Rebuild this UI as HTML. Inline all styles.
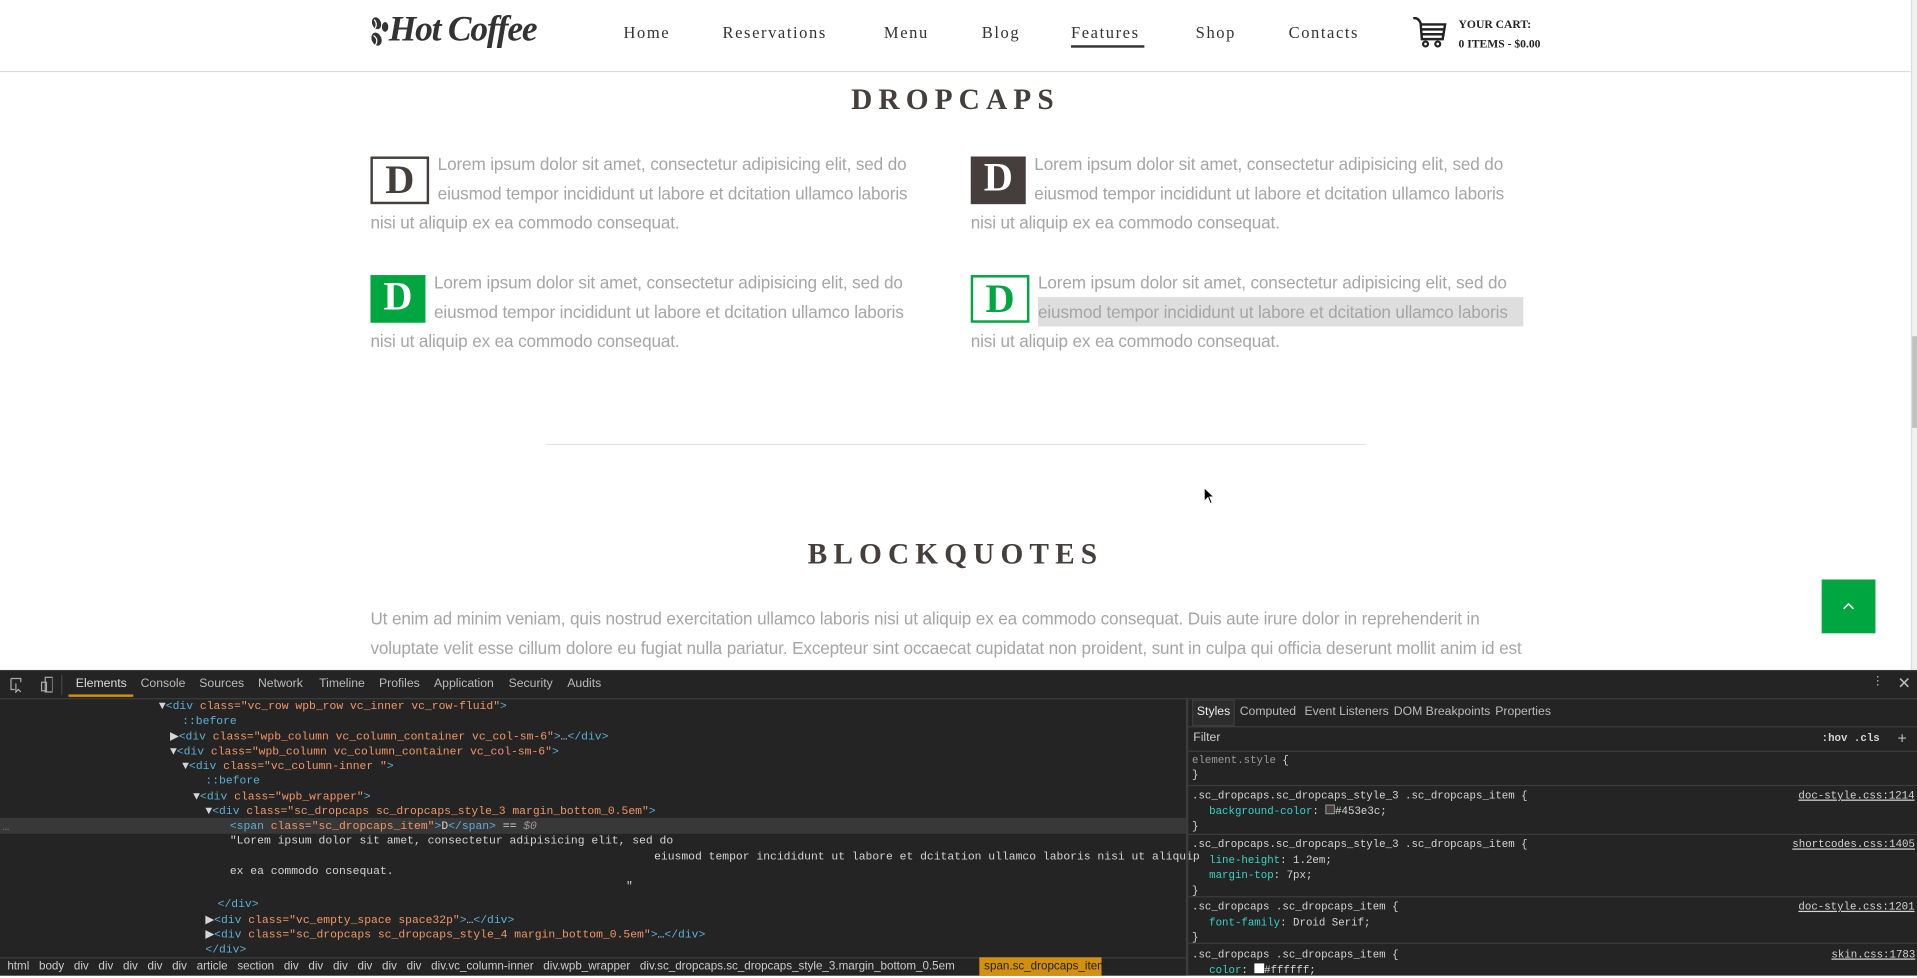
<!DOCTYPE html>
<html><head><meta charset="utf-8"><style>
*{margin:0;padding:0;box-sizing:border-box}
html,body{width:1917px;height:976px;overflow:hidden;background:#fff}
#w{position:absolute;left:0;top:0;width:1568px;height:798px;transform:scale(1.22258);transform-origin:0 0;font-family:"Liberation Sans",sans-serif}
.a{position:absolute;white-space:nowrap}
.nav{font-family:"Liberation Serif",serif;font-size:13.5px;letter-spacing:1.3px;color:#333;top:19px}
.p{font-family:"Liberation Sans",sans-serif;font-size:14px;color:#a5a5a5;line-height:24px;letter-spacing:-.1px}
.dp{position:absolute;width:470px;white-space:nowrap}
.dc{float:left;width:48px;height:39px;margin:6px 7px 0 0;font-family:"Liberation Serif",serif;font-weight:bold;font-size:33px;line-height:36px;text-align:center}
.h{font-family:"Liberation Serif",serif;font-weight:bold;font-size:24px;letter-spacing:5px;color:#453e3c}
.dt{font-family:"Liberation Sans",sans-serif;font-size:10px;color:#bbb}
.m{font-family:"Liberation Mono",monospace;font-size:9.3px;color:#d5d5d5;line-height:12.3px}
.s{font-size:8.8px}
.t{color:#5db0d7}.o{color:#f29766}.c{color:#35d4c7}
</style></head><body><div id="w">
<div class="a" style="left:0;top:58px;width:1563px;height:1px;background:#ddd"></div>
<svg class="a" style="left:303px;top:13px" width="16" height="28" viewBox="0 0 16 28"><ellipse cx="5" cy="6" rx="3.6" ry="5" fill="#333" transform="rotate(-20 5 6)"/><ellipse cx="5" cy="19" rx="4" ry="5.5" fill="#333" transform="rotate(-20 5 19)"/><ellipse cx="12" cy="9" rx="2.6" ry="4" fill="#333"/><path d="M3 3 Q6 6 4 10 M2.5 16 Q7 19 4 24" stroke="#fff" stroke-width="1" fill="none"/></svg>
<div class="a" style="left:318px;top:8px;font-family:'Liberation Serif',serif;font-style:italic;font-weight:bold;font-size:29px;color:#333;letter-spacing:-1px">Hot Coffee</div>
<div class="a nav" style="left:510px">Home</div>
<div class="a nav" style="left:591px">Reservations</div>
<div class="a nav" style="left:723px">Menu</div>
<div class="a nav" style="left:803px">Blog</div>
<div class="a nav" style="left:876px">Features</div>
<div class="a" style="left:876px;top:37px;width:60px;height:2px;background:#333"></div>
<div class="a nav" style="left:978px">Shop</div>
<div class="a nav" style="left:1054px">Contacts</div>
<svg class="a" style="left:1155px;top:13px" width="30" height="28" viewBox="0 0 30 28"><path d="M1 2 Q5 1 7 6 L8 19 L25 19 L27 7 L8 7 M8 11 L26 11 M8 15 L26 15" stroke="#222" stroke-width="2" fill="none"/><circle cx="11" cy="23" r="2" stroke="#222" stroke-width="1.8" fill="none"/><circle cx="21" cy="23" r="2" stroke="#222" stroke-width="1.8" fill="none"/></svg>
<div class="a" style="left:1193px;top:13px;font-family:'Liberation Serif',serif;font-weight:bold;font-size:9.5px;color:#222;line-height:16px">YOUR CART:<br>0 ITEMS - $0.00</div>
<div class="a" style="left:1563px;top:0;width:5px;height:548px;background:#f1f1f1;border-left:1px solid #ddd"></div>
<div class="a" style="left:1564px;top:275px;width:4px;height:75px;background:#c1c1c1"></div>
<div class="a h" style="left:0;width:1563px;text-align:center;top:69px">DROPCAPS</div>
<div class="dp p" style="left:303px;top:122px"><div class="dc" style="border:2px solid #453e3c;color:#453e3c">D</div>Lorem ipsum dolor sit amet, consectetur adipisicing elit, sed do<br>eiusmod tempor incididunt ut labore et dcitation ullamco laboris<br>nisi ut aliquip ex ea commodo consequat.</div>
<div class="dp p" style="left:794px;top:122px"><div class="dc" style="background:#453e3c;color:#fff;width:45px">D</div>Lorem ipsum dolor sit amet, consectetur adipisicing elit, sed do<br>eiusmod tempor incididunt ut labore et dcitation ullamco laboris<br>nisi ut aliquip ex ea commodo consequat.</div>
<div class="dp p" style="left:303px;top:219px"><div class="dc" style="background:#00a63f;color:#fff;width:45px">D</div>Lorem ipsum dolor sit amet, consectetur adipisicing elit, sed do<br>eiusmod tempor incididunt ut labore et dcitation ullamco laboris<br>nisi ut aliquip ex ea commodo consequat.</div>
<div class="a" style="left:849px;top:243px;width:397px;height:24px;background:#dedede"></div>
<div class="dp p" style="left:794px;top:219px"><div class="dc" style="border:2px solid #00a63f;color:#00a63f">D</div>Lorem ipsum dolor sit amet, consectetur adipisicing elit, sed do<br>eiusmod tempor incididunt ut labore et dcitation ullamco laboris<br>nisi ut aliquip ex ea commodo consequat.</div>
<div class="a" style="left:447px;top:363px;width:670px;height:1px;background:#e2e2e2"></div>
<svg class="a" style="left:984px;top:398px" width="10" height="15" viewBox="0 0 10 15"><path d="M1 1 L1 12 L4 9 L6 14 L7.5 13.3 L5.5 8.5 L9 8.5 Z" fill="#000" stroke="#fff" stroke-width=".8"/></svg>
<div class="a h" style="left:0;width:1563px;text-align:center;top:441px">BLOCKQUOTES</div>
<div class="a p" style="left:303px;top:494px">Ut enim ad minim veniam, quis nostrud exercitation ullamco laboris nisi ut aliquip ex ea commodo consequat. Duis aute irure dolor in reprehenderit in</div>
<div class="a p" style="left:303px;top:518px">voluptate velit esse cillum dolore eu fugiat nulla pariatur. Excepteur sint occaecat cupidatat non proident, sunt in culpa qui officia deserunt mollit anim id est</div>
<div class="a" style="left:1490px;top:474px;width:44px;height:44px;background:#00a63f"></div>
<svg class="a" style="left:1507px;top:493px" width="10" height="6"><path d="M1 5 L5 1 L9 5" stroke="#fff" stroke-width="1.3" fill="none"/></svg>
<div class="a" style="left:0;top:548px;width:1568px;height:250px;background:#242424;border-top:1px solid #3d3d3d"></div>
<div class="a" style="left:0;top:571px;width:1568px;height:1px;background:#3d3d3d"></div>
<svg class="a" style="left:7px;top:553px" width="36" height="14"><path d="M2 2 H10 V5 M2 2 V11 H5" stroke="#aaa" fill="none"/><path d="M6 6 L6 13 L8 11 L10 13" stroke="#aaa" fill="none"/><rect x="30" y="1" width="6" height="12" stroke="#aaa" fill="none"/><rect x="27" y="5" width="4" height="7" stroke="#aaa" fill="none"/></svg>
<div class="a" style="left:50px;top:552px;width:1px;height:16px;background:#444"></div>
<div class="a dt" style="left:62px;top:554px;color:#ddd">Elements</div>
<div class="a" style="left:56px;top:568px;width:53px;height:2px;background:#d3900f"></div>
<div class="a dt" style="left:115px;top:554px">Console</div>
<div class="a dt" style="left:163px;top:554px">Sources</div>
<div class="a dt" style="left:211px;top:554px">Network</div>
<div class="a dt" style="left:261px;top:554px">Timeline</div>
<div class="a dt" style="left:310px;top:554px">Profiles</div>
<div class="a dt" style="left:355px;top:554px">Application</div>
<div class="a dt" style="left:416px;top:554px">Security</div>
<div class="a dt" style="left:464px;top:554px">Audits</div>
<div class="a dt" style="left:1531px;top:552px">⋮</div>
<div class="a dt" style="left:1552px;top:551px;font-size:13px">✕</div>
<div class="a" style="left:0;top:669px;width:970px;height:13px;background:#383838"></div>
<div class="a m" style="left:2px;top:671px;color:#777">…</div>
<div class="a m" style="left:130px;top:572px;line-height:12.27px">
<div>▼<span class="t">&lt;div </span><span class="o">class=</span><span class="o">"vc_row wpb_row vc_inner vc_row-fluid"</span><span class="t">&gt;</span></div>
<div class="t" style="padding-left:19px">::before</div>
<div style="padding-left:9px">▶<span class="t">&lt;div </span><span class="o">class="wpb_column vc_column_container vc_col-sm-6"</span><span class="t">&gt;</span>…<span class="t">&lt;/div&gt;</span></div>
<div style="padding-left:9px">▼<span class="t">&lt;div </span><span class="o">class="wpb_column vc_column_container vc_col-sm-6"</span><span class="t">&gt;</span></div>
<div style="padding-left:19px">▼<span class="t">&lt;div </span><span class="o">class="vc_column-inner "</span><span class="t">&gt;</span></div>
<div class="t" style="padding-left:38px">::before</div>
<div style="padding-left:28px">▼<span class="t">&lt;div </span><span class="o">class="wpb_wrapper"</span><span class="t">&gt;</span></div>
<div style="padding-left:38px">▼<span class="t">&lt;div </span><span class="o">class="sc_dropcaps sc_dropcaps_style_3 margin_bottom_0.5em"</span><span class="t">&gt;</span></div>
<div style="padding-left:58px"><span class="t">&lt;span </span><span class="o">class="sc_dropcaps_item"</span><span class="t">&gt;</span>D<span class="t">&lt;/span&gt;</span> == <i style="color:#999">$0</i></div>
<div style="padding-left:58px">"Lorem ipsum dolor sit amet, consectetur adipisicing elit, sed do</div>
<div style="padding-left:405px">eiusmod tempor incididunt ut labore et dcitation ullamco laboris nisi ut aliquip</div>
<div style="padding-left:58px">ex ea commodo consequat.</div>
<div style="padding-left:382px">"</div>
<div class="t" style="padding-left:48px;margin-top:3px">&lt;/div&gt;</div>
<div style="padding-left:38px">▶<span class="t">&lt;div </span><span class="o">class="vc_empty_space space32p"</span><span class="t">&gt;</span>…<span class="t">&lt;/div&gt;</span></div>
<div style="padding-left:38px">▶<span class="t">&lt;div </span><span class="o">class="sc_dropcaps sc_dropcaps_style_4 margin_bottom_0.5em"</span><span class="t">&gt;</span>…<span class="t">&lt;/div&gt;</span></div>
<div class="t" style="padding-left:38px">&lt;/div&gt;</div>
<div class="t" style="padding-left:38px">::after</div>
</div>
<div class="a" style="left:0;top:783px;width:970px;height:15px;background:#242424;border-top:1px solid #3d3d3d"></div>
<div class="a dt" style="left:6px;top:785px;font-size:9.5px;color:#ccc;word-spacing:5.3px">html body div div div div div article section div div div div div div div.vc_column-inner div.wpb_wrapper div.sc_dropcaps.sc_dropcaps_style_3.margin_bottom_0.5em</div>
<div class="a" style="left:801px;top:783px;width:100px;height:15px;background:#d3900f"></div>
<div class="a dt" style="left:805px;top:785px;font-size:9.5px;color:#222">span.sc_dropcaps_item</div>
<div class="a" style="left:970px;top:572px;width:2px;height:226px;background:#3d3d3d"></div>
<div class="a" style="left:975px;top:572px;width:35px;height:22px;background:#2d2d2d;border:1px solid #3d3d3d"></div>
<div class="a dt" style="left:979px;top:577px;color:#eee">Styles</div>
<div class="a dt" style="left:1014px;top:577px">Computed</div>
<div class="a dt" style="left:1067px;top:577px">Event Listeners</div>
<div class="a dt" style="left:1140px;top:577px">DOM Breakpoints</div>
<div class="a dt" style="left:1223px;top:577px">Properties</div>
<div class="a" style="left:972px;top:594px;width:596px;height:1px;background:#3d3d3d"></div>
<div class="a dt" style="left:976px;top:598px;color:#ccc">Filter</div>
<div class="a m s" style="left:1490px;top:598px;font-weight:bold">:hov .cls</div>
<div class="a dt" style="left:1552px;top:596px;font-size:13px">+</div>
<div class="a" style="left:972px;top:614px;width:596px;height:1px;background:#3d3d3d"></div>
<div class="a m s" style="left:975px;top:616px">
<div><span style="color:#999">element.style</span> {</div><div>}</div>
</div>
<div class="a" style="left:972px;top:642px;width:596px;height:1px;background:#3d3d3d"></div>
<div class="a m s" style="left:975px;top:645px;line-height:12.5px">
<div>.sc_dropcaps.sc_dropcaps_style_3 .sc_dropcaps_item {</div>
<div style="padding-left:14px"><span class="c">background-color</span>: <span style="display:inline-block;width:8px;height:8px;background:#453e3c;border:1px solid #888"></span>#453e3c;</div>
<div>}</div></div>
<div class="a m s" style="left:1471px;top:645px;text-decoration:underline">doc-style.css:1214</div>
<div class="a" style="left:972px;top:682px;width:596px;height:1px;background:#3d3d3d"></div>
<div class="a m s" style="left:975px;top:685px;line-height:12.5px">
<div>.sc_dropcaps.sc_dropcaps_style_3 .sc_dropcaps_item {</div>
<div style="padding-left:14px"><span class="c">line-height</span>: 1.2em;</div>
<div style="padding-left:14px"><span class="c">margin-top</span>: 7px;</div>
<div>}</div></div>
<div class="a m s" style="left:1466px;top:685px;text-decoration:underline">shortcodes.css:1405</div>
<div class="a" style="left:972px;top:733px;width:596px;height:1px;background:#3d3d3d"></div>
<div class="a m s" style="left:975px;top:736px;line-height:12.5px">
<div>.sc_dropcaps .sc_dropcaps_item {</div>
<div style="padding-left:14px"><span class="c">font-family</span>: Droid Serif;</div>
<div>}</div></div>
<div class="a m s" style="left:1471px;top:736px;text-decoration:underline">doc-style.css:1201</div>
<div class="a" style="left:972px;top:771px;width:596px;height:1px;background:#3d3d3d"></div>
<div class="a m s" style="left:975px;top:775px;line-height:12.5px">
<div>.sc_dropcaps .sc_dropcaps_item {</div>
<div style="padding-left:14px"><span class="c">color</span>: <span style="display:inline-block;width:8px;height:8px;background:#fff"></span>#ffffff;</div></div>
<div class="a m s" style="left:1498px;top:775px;text-decoration:underline">skin.css:1783</div>
</div></body></html>
